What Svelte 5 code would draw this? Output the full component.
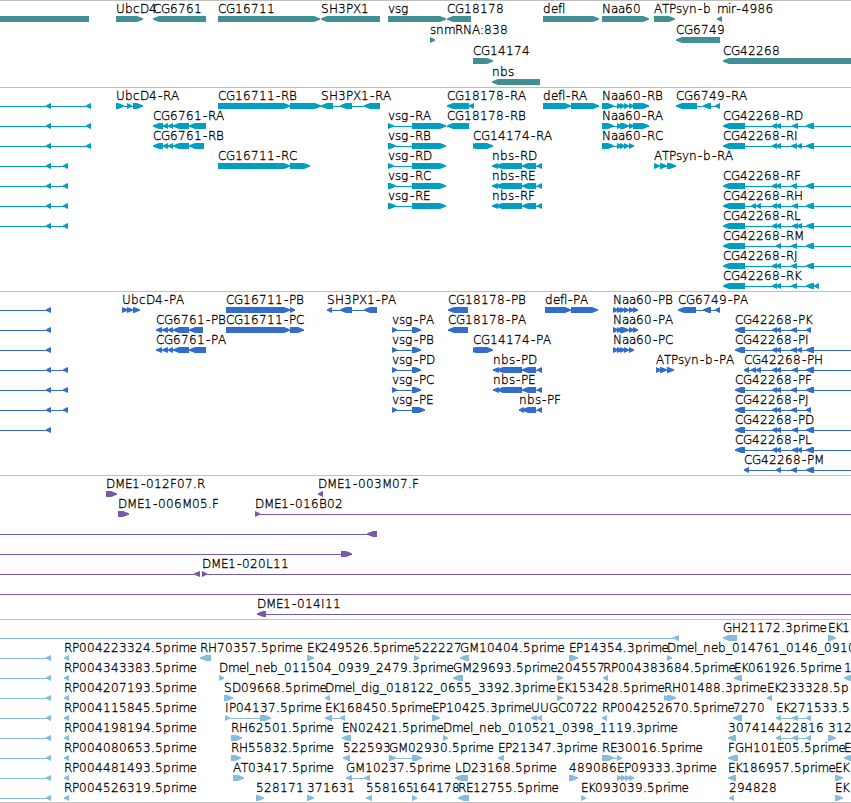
<script lang="ts">
	type Feature = {
		row: number;
		dir: string;
		label: string;
		exons: number[][];
		from: number;
		to: number;
	};

	const WIDTH = 851;
	const BAR = 6;

	// f(row, direction, label, exon pairs, optional ends of the connecting line)
	function f(row: number, dir: string, label: string, coords: number[], from?: number, to?: number): Feature {
		const exons = [];
		for (let i = 0; i < coords.length; i += 2) {
			exons.push([coords[i], coords[i + 1]]);
		}
		return {
			row,
			dir,
			label,
			exons,
			from: from ?? coords[0],
			to: to ?? coords[coords.length - 1]
		};
	}

	const rows = (list: number[], dir: string, coords: number[]) => list.map((r) => f(r, dir, '', coords, 0));

	const tracks = [
		{
			name: 'genes',
			height: 87,
			pitch: 21,
			features: [
				f(0, '', '', [0, 89]),
				f(0, '+', 'UbcD4', [116, 143]),
				f(0, '-', 'CG6761', [153, 206]),
				f(0, '+', 'CG16711', [218, 320]),
				f(0, '-', 'SH3PX1', [321, 380]),
				f(0, '+', 'vsg', [388, 446]),
				f(0, '-', 'CG18178', [447, 471]),
				f(0, '+', 'defl', [543, 599]),
				f(0, '+', 'Naa60', [602, 649]),
				f(0, '+', 'ATPsyn-b', [654, 675]),
				f(0, '-', 'mir-4986', [717, 722]),
				f(1, '+', 'snmRNA:838', [430, 435]),
				f(1, '-', 'CG6749', [676, 720]),
				f(2, '+', 'CG14174', [473, 493]),
				f(2, '-', 'CG42268', [723, 860]),
				f(3, '-', 'nbs', [492, 540])
			]
		},
		{
			name: 'transcripts',
			height: 204,
			pitch: 20,
			features: [
				...rows([0, 1, 2], '-', [46, 51, 86, 91]),
				...rows([3, 4, 5, 6], '-', [46, 51, 63, 68]),
				f(0, '+', 'UbcD4-RA', [116, 124, 127, 132, 133, 143]),
				f(1, '-', 'CG6761-RA', [153, 163, 163, 168, 168, 173, 173, 189, 189, 206]),
				f(2, '-', 'CG6761-RB', [153, 163, 163, 168, 168, 173, 173, 189, 189, 204]),
				f(0, '+', 'CG16711-RB', [218, 290, 290, 321]),
				f(3, '+', 'CG16711-RC', [218, 290, 290, 310]),
				f(0, '-', 'SH3PX1-RA', [321, 333, 340, 352, 364, 380]),
				f(1, '+', 'vsg-RA', [388, 394, 412, 446]),
				f(2, '+', 'vsg-RB', [388, 396, 412, 446]),
				f(3, '+', 'vsg-RD', [388, 394, 412, 446]),
				f(4, '+', 'vsg-RC', [388, 396, 412, 446]),
				f(5, '+', 'vsg-RE', [388, 396, 412, 446]),
				f(0, '-', 'CG18178-RA', [447, 469, 469, 474]),
				f(1, '-', 'CG18178-RB', [447, 469]),
				f(2, '+', 'CG14174-RA', [473, 478, 475, 493]),
				f(3, '-', 'nbs-RD', [492, 498, 496, 522, 522, 536, 537, 542]),
				f(4, '-', 'nbs-RE', [492, 498, 496, 522, 522, 536, 537, 542]),
				f(5, '-', 'nbs-RF', [492, 498, 496, 522, 522, 536, 537, 542]),
				f(0, '+', 'defl-RA', [543, 571, 571, 599]),
				f(0, '+', 'Naa60-RB', [602, 614, 617, 622, 620, 625, 624, 629, 629, 634, 633, 649]),
				f(1, '+', 'Naa60-RA', [602, 614, 617, 622, 620, 629, 629, 634, 633, 649]),
				f(2, '+', 'Naa60-RC', [602, 614, 617, 622, 620, 625, 624, 629, 629, 634]),
				f(3, '+', 'ATPsyn-b-RA', [654, 660, 660, 667, 667, 676]),
				f(0, '-', 'CG6749-RA', [676, 697, 703, 711, 715, 720]),
				f(1, '-', 'CG42268-RD', [723, 745, 772, 777, 776, 781, 792, 798, 806, 814], 723, WIDTH),
				f(2, '-', 'CG42268-RI', [723, 745, 772, 777, 776, 781, 791, 797, 797, 802, 806, 814], 723, WIDTH),
				f(4, '-', 'CG42268-RF', [723, 745, 772, 777, 776, 781, 791, 797, 806, 814], 723, WIDTH),
				f(5, '-', 'CG42268-RH', [723, 745, 751, 756, 756, 761, 772, 777, 776, 781, 792, 798, 806, 814], 723, WIDTH),
				f(6, '-', 'CG42268-RL', [723, 745, 772, 777, 776, 781, 792, 798, 797, 802, 806, 814], 723, WIDTH),
				f(7, '-', 'CG42268-RM', [723, 745, 776, 781, 791, 797, 806, 814], 723, WIDTH),
				f(8, '-', 'CG42268-RJ', [723, 745, 772, 777, 776, 781, 791, 797, 806, 814], 723, WIDTH),
				f(9, '-', 'CG42268-RK', [723, 745, 772, 777, 776, 781, 791, 797, 806, 814, 814, 819])
			]
		},
		{
			name: 'proteins',
			height: 184,
			pitch: 20,
			features: [
				...rows([0, 1, 2, 6], '-', [46, 51]),
				...rows([3, 4, 5], '-', [46, 51, 63, 68]),
				f(0, '+', 'UbcD4-PA', [122, 128, 127, 133, 133, 140]),
				f(1, '-', 'CG6761-PB', [156, 162, 162, 168, 168, 173, 173, 189, 189, 203]),
				f(2, '-', 'CG6761-PA', [156, 162, 162, 168, 168, 173, 173, 189, 189, 206]),
				f(0, '+', 'CG16711-PB', [226, 290, 290, 295]),
				f(1, '+', 'CG16711-PC', [226, 290, 290, 304]),
				f(0, '-', 'SH3PX1-PA', [327, 332, 340, 352, 364, 377]),
				f(1, '+', 'vsg-PA', [392, 397, 412, 421]),
				f(2, '+', 'vsg-PB', [392, 397, 412, 421]),
				f(3, '+', 'vsg-PD', [392, 397, 412, 421]),
				f(4, '+', 'vsg-PC', [392, 397, 412, 421]),
				f(5, '+', 'vsg-PE', [392, 397, 412, 425]),
				f(0, '-', 'CG18178-PB', [448, 468]),
				f(1, '-', 'CG18178-PA', [448, 468]),
				f(2, '+', 'CG14174-PA', [473, 478, 475, 493]),
				f(3, '-', 'nbs-PD', [493, 499, 497, 522, 522, 536, 537, 542]),
				f(4, '-', 'nbs-PE', [493, 499, 497, 522, 522, 536, 537, 542]),
				f(5, '-', 'nbs-PF', [519, 524, 522, 536, 537, 542]),
				f(0, '+', 'defl-PA', [545, 571, 571, 598]),
				f(0, '+', 'Naa60-PB', [613, 618, 617, 622, 620, 625, 624, 629, 629, 634, 633, 638]),
				f(1, '+', 'Naa60-PA', [613, 618, 617, 622, 620, 629, 629, 634, 633, 638]),
				f(2, '+', 'Naa60-PC', [613, 618, 617, 622, 620, 625, 624, 629, 629, 634]),
				f(3, '+', 'ATPsyn-b-PA', [656, 661, 660, 667, 667, 674]),
				f(0, '-', 'CG6749-PA', [678, 696, 703, 711, 715, 720]),
				f(1, '-', 'CG42268-PK', [735, 745, 772, 777, 776, 781, 791, 797, 806, 811]),
				f(2, '-', 'CG42268-PI', [735, 745, 772, 777, 776, 781, 791, 797, 797, 802, 806, 814], 735, WIDTH),
				f(3, '-', 'CG42268-PH', [744, 749, 751, 756, 756, 761, 772, 777, 776, 781, 792, 798, 806, 814], 744, WIDTH),
				f(4, '-', 'CG42268-PF', [735, 745, 772, 777, 776, 781, 791, 797, 806, 814], 735, WIDTH),
				f(5, '-', 'CG42268-PJ', [735, 745, 772, 777, 776, 781, 791, 797, 806, 811]),
				f(6, '-', 'CG42268-PD', [735, 745, 772, 777, 776, 781, 792, 798, 806, 814], 735, WIDTH),
				f(7, '-', 'CG42268-PL', [735, 745, 772, 777, 776, 781, 792, 798, 797, 802, 806, 814], 735, WIDTH),
				f(8, '-', 'CG42268-PM', [744, 749, 776, 781, 791, 797, 806, 814], 744, WIDTH)
			]
		},
		{
			name: 'clones',
			height: 144,
			pitch: 20,
			features: [
				f(0, '+', 'DME1-012F07.R', [106, 117]),
				f(0, '-', 'DME1-003M07.F', [318, 323]),
				f(1, '+', 'DME1-006M05.F', [118, 129]),
				f(1, '+', 'DME1-016B02', [255, 260], 255, WIDTH),
				f(2, '-', '', [367, 377], 0),
				f(3, '+', '', [341, 352], 0),
				f(4, '-', '', [194, 200], 0),
				f(4, '+', 'DME1-020L11', [202, 207], 202, WIDTH),
				f(5, '', '', [], 0, WIDTH),
				f(6, '-', 'DME1-014I11', [257, 266], 257, WIDTH)
			]
		},
		{
			name: 'ests',
			height: 184,
			pitch: 20,
			features: [
				f(0, '-', '', [673, 679], 0),
				...rows([1, 2, 3, 4, 5, 6, 7, 8], '-', [46, 51]),
				f(0, '-', 'GH21172.3prime', [723, 737]),
				f(0, '+', 'EK1', [828, 836]),
				f(1, '-', 'RP004223324.5prime', [64, 69]),
				f(1, '-', 'RH70357.5prime', [200, 211]),
				f(1, '+', 'EK249526.5prime', [307, 314]),
				f(1, '+', '522227', [414, 419]),
				f(1, '-', 'GM10404.5prime', [460, 469]),
				f(1, '+', 'EP14354.3prime', [569, 578]),
				f(1, '+', 'Dmel_neb_014761_0146_0910', [667, 672]),
				f(2, '-', 'RP004343383.5prime', [64, 69]),
				f(2, '+', 'Dmel_neb_011504_0939_2479.3prime', [219, 224]),
				f(2, '-', 'GM29693.5prime', [453, 463]),
				f(2, '+', '204557', [557, 563]),
				f(2, '-', 'RP004383684.5prime', [603, 608]),
				f(2, '-', 'EK061926.5prime', [734, 742]),
				f(2, '-', '1', [844, 853]),
				f(3, '-', 'RP004207193.5prime', [64, 69]),
				f(3, '+', 'SD09668.5prime', [224, 233]),
				f(3, '-', 'Dmel_dig_018122_0655_3392.3prime', [325, 330]),
				f(3, '+', 'EK153428.5prime', [557, 563]),
				f(3, '+', 'RH01488.3prime', [664, 669, 667, 676]),
				f(3, '-', 'EK233328.5p', [767, 772]),
				f(4, '-', 'RP004115845.5prime', [64, 69]),
				f(4, '+', 'IP04137.5prime', [225, 230, 260, 271]),
				f(4, '-', 'EK168450.5prime', [325, 332, 340, 345]),
				f(4, '+', 'EP10425.3prime', [432, 440]),
				f(4, '-', 'UUGC0722', [531, 537, 537, 542]),
				f(4, '-', 'RP004252670.5prime', [602, 607]),
				f(4, '-', '7270', [733, 742]),
				f(4, '-', 'EK271533.5', [776, 781, 792, 798, 806, 811]),
				f(5, '-', 'RP004198194.5prime', [64, 69]),
				f(5, '+', 'RH62501.5prime', [231, 242]),
				f(5, '-', 'EN02421.5prime', [342, 351]),
				f(5, '+', 'Dmel_neb_010521_0398_1119.3prime', [443, 448]),
				f(5, '-', '307414', [728, 736]),
				f(5, '-', '422816', [776, 781, 792, 798, 806, 811]),
				f(5, '+', '312', [828, 836]),
				f(6, '-', 'RP004080653.5prime', [64, 69]),
				f(6, '+', 'RH55832.5prime', [231, 241]),
				f(6, '-', '522593', [343, 350]),
				f(6, '+', 'GM02930.5prime', [389, 396, 412, 422]),
				f(6, '-', 'EP21347.3prime', [498, 504]),
				f(6, '+', 'RE30016.5prime', [602, 614, 617, 622]),
				f(6, '-', 'FGH101E05.5prime', [728, 738]),
				f(6, '-', 'E', [844, 853]),
				f(7, '-', 'RP004481493.5prime', [64, 69]),
				f(7, '+', 'AT03417.5prime', [233, 244]),
				f(7, '-', 'GM10237.5prime', [346, 352, 364, 370]),
				f(7, '-', 'LD23168.5prime', [455, 468]),
				f(7, '+', '489086', [569, 578]),
				f(7, '+', 'EP09333.3prime', [617, 622, 621, 626, 625, 630, 629, 634]),
				f(7, '-', 'EK186957.5prime', [728, 736]),
				f(7, '+', 'EK', [835, 843]),
				f(8, '-', 'RP004526319.5prime', [64, 69]),
				f(8, '+', '528171', [256, 264]),
				f(8, '+', '371631', [307, 314]),
				f(8, '-', '558165', [366, 372]),
				f(8, '+', '164178', [412, 417]),
				f(8, '-', 'RE12755.5prime', [458, 469]),
				f(8, '+', 'EK093039.5prime', [581, 586]),
				f(8, '-', '294828', [729, 734]),
				f(8, '+', 'EK', [835, 843])
			]
		}
	];

	const advances: Record<string, number> = {
		A: 8, B: 8, C: 8, D: 9, E: 7, F: 7, G: 9, H: 9, I: 4, J: 4, K: 7, L: 7, M: 10,
		N: 9, P: 7, R: 8, S: 8, T: 7, U: 9, X: 8,
		a: 7, b: 8, c: 7, d: 8, e: 7, f: 4, g: 8, i: 3, l: 3, m: 11, n: 8, p: 8, r: 4.5,
		s: 6, v: 7, y: 7, '-': 6, '_': 6, '.': 4, ':': 4
	};

	function glyphX(label: string, start: number) {
		let x = start;
		return [...label]
			.map((c) => {
				// the hyphen is narrower than its cell
				const at = c === '-' ? x + 1 : x;
				x += advances[c] ?? 8;
				return at;
			})
			.join(' ');
	}

	function arrow([a, b]: number[], y: number, dir: string) {
		const end = y + BAR;
		if (!dir) return `${a},${y} ${b},${y} ${b},${end} ${a},${end}`;

		const tip = Math.min(b - a, 6);
		const head = dir === '+' ? b : a;
		const tail = dir === '+' ? a : b;
		const step = dir === '+' ? -1 : 1;
		const neck = head + step * tip;
		const bend = head + step * tip * 0.45;
		return [
			[tail, y],
			[neck, y],
			[bend, y + 1.2],
			[head, y + 2.4],
			[head, y + 3.6],
			[bend, end - 1.2],
			[neck, end],
			[tail, end]
		].join(' ');
	}
</script>

<div class="browser">
	{#each tracks as track (track.name)}
		<section class="track {track.name}">
			<svg width={WIDTH} height={track.height - 1} viewBox="0 1 {WIDTH} {track.height - 1}">
				{#each track.features as feature}
					{@const y = 16 + feature.row * track.pitch}
					<rect x={feature.from} y={y + 3} width={feature.to - feature.from} height="1" />
					{#each feature.exons as exon}
						<polygon points={arrow(exon, y, feature.dir)} />
					{/each}
					{#if feature.label}
						<text x={glyphX(feature.label, feature.from)} y={y - 3}>{feature.label}</text>
					{/if}
				{/each}
			</svg>
		</section>
	{/each}
</div>

<style>
	:global(body) {
		background: #fff;
	}

	.browser {
		width: 851px;
		height: 803px;
		overflow: hidden;
	}

	.track {
		border-top: 1px solid #bfbfbf;
	}

	.track:last-child {
		height: 182px;
		border-bottom: 1px solid #bfbfbf;
		overflow: hidden;
	}

	svg {
		display: block;
	}

	text {
		font-family: "DejaVu Sans", sans-serif;
		font-size: 12px;
		font-weight: 200;
		fill: #000;
		stroke: #000;
		stroke-width: 0.3px;
	}

	.genes {
		fill: #408f94;
	}

	.transcripts {
		fill: #009fc0;
	}

	.proteins {
		fill: #326dcc;
	}

	.clones {
		fill: #7859a8;
	}

	.ests {
		fill: #86bbdd;
	}
</style>
